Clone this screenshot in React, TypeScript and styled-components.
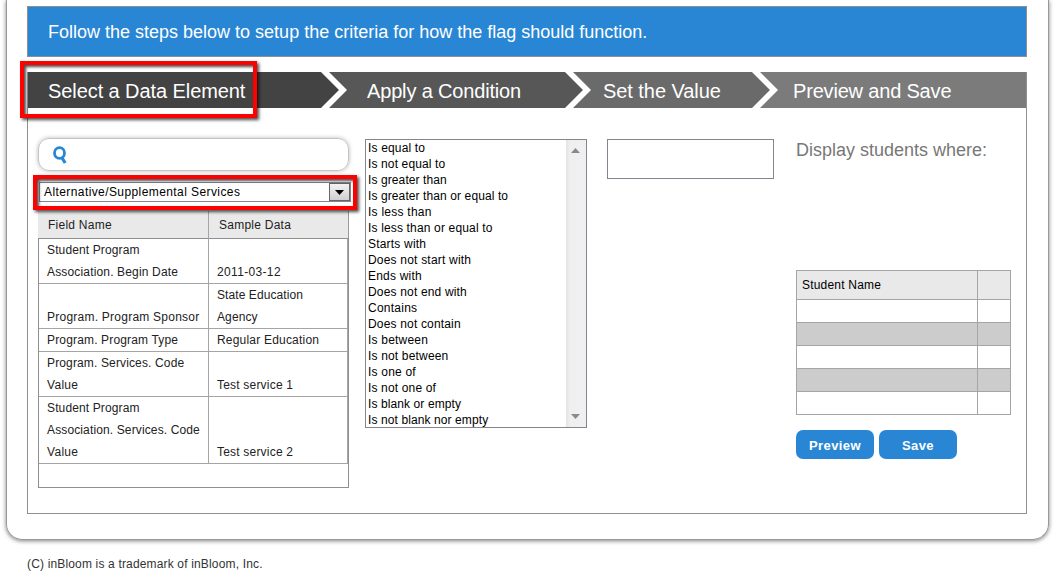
import React from "react";
import styled, { createGlobalStyle } from "styled-components";

const Global = createGlobalStyle`
  * { box-sizing: border-box; }
  body { margin: 0; background: #fff; overflow: hidden; font-family: "Liberation Sans", Arial, sans-serif; font-size: 12px; color: #222; }
`;

const Page = styled.div`
  width: 1057px;
  height: 575px;
  overflow: hidden;
`;

const Card = styled.main`
  width: 1043px;
  height: 540px;
  margin-left: 6px;
  padding: 6px 21px 0 20px;
  border: 1px solid #999;
  border-top: 0;
  border-radius: 0 0 16px 16px;
  box-shadow: 0 1px 4px rgba(0, 0, 0, 0.5);
`;

const Banner = styled.header`
  width: 1000px;
  height: 51px;
  padding: 1px 0 0 20px;
  border: 1px solid #8f8f8f;
  background: #2886d5;
  color: #fff;
  font-size: 18px;
  line-height: 49px;
  white-space: nowrap;
`;

const Wizard = styled.section`
  width: 1000px;
  height: 442px;
  margin-top: 15px;
  border: 1px solid #8f8f8f;
  border-top: 0;
`;

const Steps = styled.nav`
  display: flex;
  height: 36px;
  color: #fff;
  font-size: 20px;
  line-height: 38px;
`;

const Step = styled.div<{ $w: number; $pad: number; $bg: string }>`
  position: relative;
  display: flex;
  flex: none;
  width: ${(p) => p.$w}px;
  padding-left: ${(p) => p.$pad}px;
  background: ${(p) => p.$bg};
  white-space: nowrap;
`;

const Chevron = styled.svg`
  display: block;
  flex: none;
  margin-left: auto;
`;

const Columns = styled.div`
  display: flex;
  align-items: flex-start;
  padding: 30px 0 0 10px;
`;

const Text = styled.span<{ $ls?: number }>`
  letter-spacing: ${(p) => p.$ls ?? 0}px;
  white-space: nowrap;
`;

const FieldColumn = styled.div`
  width: 311px;
  margin-right: 16px;
`;

const Search = styled.div`
  display: flex;
  align-items: center;
  height: 33px;
  padding-left: 14px;
  border: 1px solid #c4c4c4;
  border-radius: 11px;
  box-shadow: 0 0 4px rgba(0, 0, 0, 0.28);
`;

const SelectBox = styled.div`
  position: relative;
  display: flex;
  align-items: center;
  justify-content: space-between;
  width: 312px;
  height: 20px;
  margin: 11px 0 0 1px;
  padding: 0 0 0 4px;
  border: 1px solid #85858f;
  color: #000;
`;

const Drop = styled.span`
  display: flex;
  align-items: center;
  justify-content: center;
  width: 21px;
  height: 18px;
  border: 1px solid #666;
  background: linear-gradient(#f3f3f3, #cfcfcf);
`;

const Highlight = styled.span<{ $l: number; $t: number; $w: number; $h: number }>`
  position: absolute;
  left: ${(p) => p.$l}px;
  top: ${(p) => p.$t}px;
  width: ${(p) => p.$w}px;
  height: ${(p) => p.$h}px;
  border: 4px solid #f00;
  box-shadow: 2px 2px 3px rgba(0, 0, 0, 0.7), inset 2px 2px 3px rgba(0, 0, 0, 0.7);
  pointer-events: none;
`;

const FieldHead = styled.div`
  display: grid;
  grid-template-columns: 171px 1fr;
  height: 27px;
  margin-top: 9px;
  border-right: 1px solid #999;
  background: #e9e9e9;
  line-height: 29px;
  span { padding-left: 10px; }
  span:first-child { border-right: 1px solid #a5a5a5; }
`;

const FieldBody = styled.div`
  height: 250px;
  border: 1px solid #8f8f8f;
`;

const FieldRow = styled.div`
  display: grid;
  grid-template-columns: 170px 139px;
  align-items: stretch;
  border-bottom: 1px solid #a5a5a5;
  line-height: 22px;
`;

const FieldCell = styled.div`
  display: flex;
  flex-direction: column;
  justify-content: flex-end;
  padding-left: 8px;
  border-right: 1px solid #a5a5a5;
`;

const List = styled.div`
  display: flex;
  justify-content: space-between;
  width: 222px;
  height: 289px;
  margin: 1px 20px 0 0;
  border: 1px solid #85858f;
  color: #000;
`;

const Options = styled.div`
  display: flex;
  flex-direction: column;
  padding-left: 2px;
  line-height: 16px;
`;

const Scrollbar = styled.div`
  display: flex;
  flex-direction: column;
  justify-content: space-between;
  align-items: center;
  width: 20px;
  padding: 8px 2px 8px 0;
  background: linear-gradient(90deg, #e3e3e3, #efefef 20%, #f0f0f0);
`;

const ValueInput = styled.div`
  width: 167px;
  height: 40px;
  margin: 1px 22px 0 0;
  border: 1px solid #85858f;
`;

const Result = styled.div`
  display: flex;
  flex-direction: column;
  width: 215px;
`;

const Caption = styled.div`
  height: 132px;
  color: #777;
  font-size: 18px;
  line-height: 24px;
`;

const Students = styled.div`
  display: grid;
  grid-template-columns: 180px 32px;
  grid-template-rows: 28px repeat(5, 22px);
  gap: 1px;
  width: 215px;
  padding: 1px;
  background: #a5a5a5;
  color: #000;
`;

const StudentCell = styled.div<{ $bg: string }>`
  padding-left: 5px;
  background: ${(p) => p.$bg};
  line-height: 28px;
`;

const Actions = styled.div`
  display: flex;
  gap: 5px;
  margin-top: 15px;
`;

const Button = styled.button`
  width: 78px;
  height: 29px;
  padding: 2px 0 0;
  border: 0;
  border-radius: 7px;
  background: #2886d5;
  color: #fff;
  font: bold 13px "Liberation Sans", Arial, sans-serif;
  letter-spacing: 0.4px;
`;

const Footer = styled.footer`
  padding: 17px 0 0 27px;
  line-height: 14px;
  color: #333;
`;

const steps = [
  { label: "Select a Data Element", w: 319, pad: 20, bg: "#434343", next: "#575757", ls: -0.08 },
  { label: "Apply a Condition", w: 244, pad: 20, bg: "#575757", next: "#6a6a6a", ls: -0.16 },
  { label: "Set the Value", w: 187, pad: 12, bg: "#6a6a6a", next: "#7b7b7b", ls: -0.06 },
  { label: "Preview and Save", w: 248, pad: 15, bg: "#7b7b7b", ls: -0.18 },
];

const fields: [string, number][][][] = [
  [[["Student Program", 0.13], ["Association. Begin Date", 0.16]], [["2011-03-12", 0.34]]],
  [[["Program. Program Sponsor", 0.24]], [["State Education", 0.08], ["Agency", 0.1]]],
  [[["Program. Program Type", 0.16]], [["Regular Education", 0.2]]],
  [[["Program. Services. Code", 0.14], ["Value", 0.3]], [["Test service 1", 0.2]]],
  [[["Student Program", 0.13], ["Association. Services. Code", 0.13], ["Value", 0.3]], [["Test service 2", 0.2]]],
];

const conditions: [string, number][] = [
  ["Is equal to", 0.16], ["Is not equal to", 0.13], ["Is greater than", 0.1], ["Is greater than or equal to", 0.1],
  ["Is less than", 0.25], ["Is less than or equal to", 0.16], ["Starts with", 0.2], ["Does not start with", 0.2],
  ["Ends with", 0.2], ["Does not end with", 0.17], ["Contains", 0.25], ["Does not contain", 0.17], ["Is between", 0.2],
  ["Is not between", 0.17], ["Is one of", 0.2], ["Is not one of", 0.15], ["Is blank or empty", 0.1], ["Is not blank nor empty", 0.1],
];

const Triangle = ({ up = false, color = "#000" }: { up?: boolean; color?: string }) => (
  <svg width="9" height="5" viewBox="0 0 9 5">
    <path d={up ? "M0 5L4.5 0L9 5Z" : "M0 0H9L4.5 5Z"} fill={color} />
  </svg>
);

export default function App() {
  return (
    <Page>
      <Global />
      <Card>
        <Banner>Follow the steps below to setup the criteria for how the flag should function.</Banner>
        <Wizard>
          <Steps>
            {steps.map((s, i) => (
              <Step key={s.label} $w={s.w} $pad={s.pad} $bg={s.bg}>
                <Text $ls={s.ls}>{s.label}</Text>
                {s.next && (
                  <Chevron width="26" height="36" viewBox="0 0 26 36">
                    <path d="M0 0H26V36H0L18 18Z" fill={s.next} />
                    <path d="M0 0H8L26 18L8 36H0L18 18Z" fill="#fff" />
                  </Chevron>
                )}
                {i === 0 && <Highlight $l={-8} $t={-11} $w={237} $h={57} />}
              </Step>
            ))}
          </Steps>
          <Columns>
            <FieldColumn>
              <Search>
                <svg width="14" height="18" viewBox="0 0 14 18" fill="none" stroke="#2886d5">
                  <ellipse cx="6.5" cy="7" rx="5" ry="5.4" strokeWidth="2.8" />
                  <path d="M8.8 11.5L12.2 17" strokeWidth="3.2" />
                </svg>
              </Search>
              <SelectBox>
                <Text $ls={0.41}>Alternative/Supplemental Services</Text>
                <Drop><Triangle /></Drop>
                <Highlight $l={-7} $t={-8} $w={324} $h={35} />
              </SelectBox>
              <FieldHead>
                <Text $ls={0.25}>Field Name</Text>
                <Text $ls={0.25}>Sample Data</Text>
              </FieldHead>
              <FieldBody>
                {fields.map((row, i) => (
                  <FieldRow key={i}>
                    {row.map((lines, j) => (
                      <FieldCell key={j}>
                        {lines.map(([t, ls]) => <Text key={t} $ls={ls}>{t}</Text>)}
                      </FieldCell>
                    ))}
                  </FieldRow>
                ))}
              </FieldBody>
            </FieldColumn>
            <List>
              <Options>{conditions.map(([c, ls]) => <Text key={c} $ls={ls}>{c}</Text>)}</Options>
              <Scrollbar>
                <Triangle up color="#8a8a8a" />
                <Triangle color="#8a8a8a" />
              </Scrollbar>
            </List>
            <ValueInput />
            <Result>
              <Caption><Text>Display students where:</Text></Caption>
              <Students>
                <StudentCell $bg="#e9e9e9"><Text $ls={0.2}>Student Name</Text></StudentCell>
                <StudentCell $bg="#e9e9e9" />
                {[0, 1, 2, 3, 4].flatMap((r) => [0, 1].map((c) => (
                  <StudentCell key={`${r}-${c}`} $bg={r % 2 ? "#ccc" : "#fff"} />
                )))}
              </Students>
              <Actions>
                <Button>Preview</Button>
                <Button>Save</Button>
              </Actions>
            </Result>
          </Columns>
        </Wizard>
      </Card>
      <Footer><Text $ls={0.16}>(C) inBloom is a trademark of inBloom, Inc.</Text></Footer>
    </Page>
  );
}
